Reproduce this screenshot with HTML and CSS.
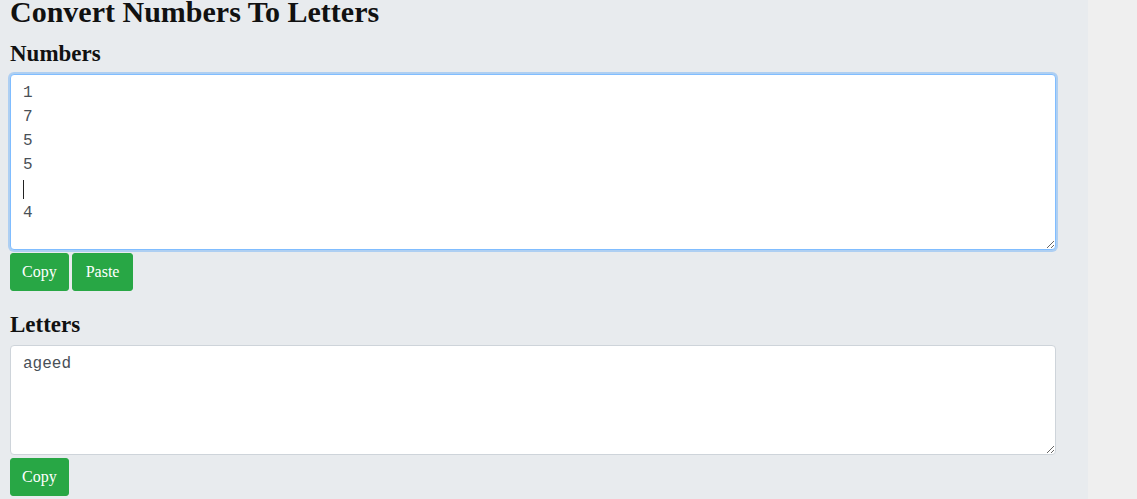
FILE: index.html
```html
<!DOCTYPE html>
<html>
<head>
<meta charset="utf-8">
<link rel="stylesheet" href="styles.css">
</head>
<body>
<div class="page">
  <main class="main">
    <h1 class="title">Convert Numbers To Letters</h1>
    <section class="group">
      <h2 class="label">Numbers</h2>
      <div class="field">
        <textarea class="box box-numbers focused">1
7
5
5

4</textarea>
        <span class="caret"></span>
      </div>
      <div class="actions">
        <button class="btn">Copy</button>
        <button class="btn">Paste</button>
      </div>
    </section>
    <section class="group group-letters">
      <h2 class="label">Letters</h2>
      <div class="field">
        <textarea class="box box-letters">ageed</textarea>
      </div>
      <div class="actions">
        <button class="btn">Copy</button>
      </div>
    </section>
  </main>
  <aside class="side"></aside>
</div>
</body>
</html>
```
FILE: styles.css
```css
html, body {
  margin: 0;
  padding: 0;
  height: 100%;
  overflow: hidden;
}
body {
  background: #efefef;
  font-family: "Liberation Serif", "DejaVu Serif", serif;
}
.page {
  display: flex;
  height: 100%;
}
.main {
  width: 1088px;
  box-sizing: border-box;
  background: #e8ebee;
  padding: 0 32px 0 10px;
}
.side {
  flex: 1;
}
.title {
  margin: -8px 0 0 0;
  font-size: 30px;
  line-height: 40px;
  font-weight: bold;
  color: #111;
}
.label {
  margin: 5px 0 3px 0;
  font-size: 23px;
  line-height: 34px;
  font-weight: bold;
  color: #111;
}
.group-letters {
  margin-top: 17px;
}
.field {
  position: relative;
}
.box {
  display: block;
  width: 100%;
  box-sizing: border-box;
  margin: 0;
  padding: 6px 12px;
  border: 1px solid #ced4da;
  border-radius: 4px;
  background: #fff;
  font-family: "Liberation Mono", "DejaVu Sans Mono", monospace;
  font-size: 16px;
  line-height: 24px;
  color: #495057;
  resize: vertical;
  outline: none;
}
.box-numbers {
  height: 176px;
}
.box-letters {
  height: 110px;
}
.focused {
  border-color: #80bdff;
  box-shadow: 0 0 0 2px rgba(0, 123, 255, 0.25);
}
.caret {
  position: absolute;
  left: 13px;
  top: 106px;
  width: 1px;
  height: 19px;
  background: #222;
}
.actions {
  display: flex;
  gap: 3px;
  margin-top: 3px;
}
.btn {
  height: 38px;
  padding: 0 11px;
  border: 1px solid #28a745;
  border-radius: 3px;
  background: #28a745;
  color: #fff;
  font-family: "Liberation Serif", "DejaVu Serif", serif;
  font-size: 16px;
  cursor: pointer;
}
.btn + .btn {
  padding: 0 13px;
}
```
